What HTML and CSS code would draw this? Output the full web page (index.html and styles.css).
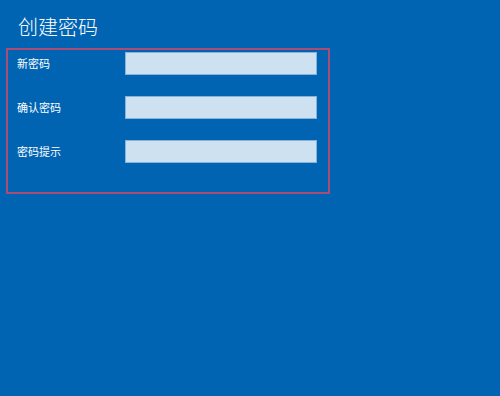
FILE: index.html
```html
<!DOCTYPE html>
<html lang="zh-CN">
<head>
<meta charset="utf-8">
<title>创建密码</title>
<link rel="stylesheet" href="styles.css">
</head>
<body>
  <main class="page">
    <h1 class="title">创建密码</h1>
    <div class="form-box">
      <div class="row">
        <label class="label">新密码</label>
        <div class="field"></div>
      </div>
      <div class="row">
        <label class="label">确认密码</label>
        <div class="field"></div>
      </div>
      <div class="row">
        <label class="label">密码提示</label>
        <div class="field"></div>
      </div>
    </div>
  </main>
</body>
</html>
```

FILE: styles.css
```css
html, body {
  margin: 0;
  padding: 0;
  height: 100%;
}
body {
  background: #0064b3;
  font-family: "Noto Sans CJK SC", "Noto Sans", sans-serif;
  color: #ffffff;
}
.page {
  padding-top: 12px;
}
.title {
  margin: 0 0 0 18px;
  font-size: 20px;
  font-weight: 300;
  line-height: 30px;
  height: 36px;
}
.form-box {
  margin-left: 6px;
  width: 311px;
  height: 140px;
  border: 2px solid #a94c76;
  padding: 2px 0 0 9px;
  box-sizing: content-box;
  display: flex;
  flex-direction: column;
  gap: 21px;
}
.row {
  display: flex;
  align-items: center;
  height: 23px;
}
.label {
  width: 108px;
  font-size: 11px;
  line-height: 23px;
}
.field {
  width: 190px;
  height: 21px;
  background: #cde1f1;
  border: 1px solid #86b3da;
}
```
